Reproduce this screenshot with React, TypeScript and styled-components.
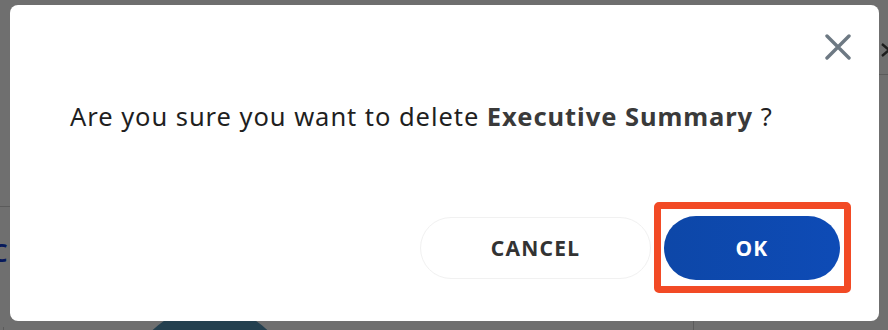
import React from "react";
import styled, { createGlobalStyle } from "styled-components";

const Global = createGlobalStyle`
  html, body { margin: 0; padding: 0; }
  body { width: 888px; height: 330px; overflow: hidden; background: #fff; font-family: "Noto Sans", Lato, sans-serif; }
`;

const Page = styled.div`
  position: relative;
  width: 888px;
  height: 330px;
  overflow: hidden;
  background: #fff;
  display: flex;
`;

const LeftRail = styled.div`
  width: 20px;
  display: flex;
  flex-direction: column;
`;

const RailHead = styled.div<{ $h: number }>`
  height: ${(p) => p.$h}px;
  flex-shrink: 0;
  border-bottom: 1px solid #d0d0d0;
  display: flex;
  align-items: flex-start;
`;

const Letter = styled.span`
  margin: 30px 0 0 -9px;
  color: #123bd0;
  font-size: 26px;
  line-height: 30px;
  font-weight: 600;
`;

const RailLine = styled.div`
  flex: 1;
  margin: 60px 0 0 3px;
  border-left: 1px solid #d0d0d0;
`;

const Center = styled.div`
  flex: 1;
  display: flex;
  align-items: flex-end;
`;

const Avatar = styled.div`
  width: 166px;
  height: 166px;
  flex-shrink: 0;
  margin: 0 0 -143px 107px;
  border-radius: 50%;
  background: #5393b6;
`;

const Divider = styled.div`
  width: 1px;
  height: 30px;
  margin-left: 400px;
  background: #d0d0d0;
`;

const RightRail = styled.div`
  width: 18px;
  display: flex;
  flex-direction: column;
`;

const ChevronBox = styled.div`
  height: 75px;
  padding: 38px 0 0 10px;
  box-sizing: border-box;
  border-bottom: 1px solid #d0d0d0;
`;

const Overlay = styled.div`
  position: absolute;
  inset: 0;
  background: rgba(0, 0, 0, 0.565);
  padding: 5px 9px 9px 10px;
  display: flex;
  box-sizing: border-box;
`;

const Modal = styled.div`
  flex: 1;
  background: #fff;
  border-radius: 8px;
  display: flex;
  flex-direction: column;
  box-sizing: border-box;
  padding: 29px 28px 0 60px;
`;

const Header = styled.div`
  display: flex;
  justify-content: flex-end;
  height: 26px;
`;

const CloseButton = styled.button`
  width: 26px;
  height: 26px;
  padding: 0;
  border: none;
  background: none;
  display: flex;
  align-items: center;
  justify-content: center;
  cursor: pointer;
`;

const Message = styled.p`
  margin: 40px 0 0 0;
  font-size: 25.5px;
  line-height: 32px;
  color: #1f1f1f;
  letter-spacing: 0.95px;
`;

const Strong = styled.strong`
  font-weight: 700;
  color: #3a3a3a;
`;

const Footer = styled.div`
  margin-top: 84px;
  display: flex;
  justify-content: flex-end;
  align-items: center;
  gap: 13px;
  padding-right: 11px;
`;

const Button = styled.button<{ $primary?: boolean }>`
  height: ${(p) => (p.$primary ? 64 : 62)}px;
  width: ${(p) => (p.$primary ? 176 : 231)}px;
  border-radius: 32px;
  font-family: "Noto Sans", Lato, sans-serif;
  font-weight: 700;
  font-size: 21px;
  letter-spacing: 1.2px;
  cursor: pointer;
  box-sizing: border-box;
  color: ${(p) => (p.$primary ? "#fff" : "#333")};
  background: ${(p) => (p.$primary ? "linear-gradient(90deg, #0d47a8, #0e4bb6)" : "#fff")};
  border: ${(p) => (p.$primary ? "none" : "1px solid #f1f1f1")};
`;

const Highlight = styled.div`
  position: relative;
  &::after {
    content: "";
    position: absolute;
    left: -10px;
    top: -14px;
    right: -11px;
    bottom: -13px;
    border: 7px solid #f24a25;
    border-radius: 5px;
    pointer-events: none;
  }
`;

export default function App() {
  return (
    <>
      <Global />
      <Page>
        <LeftRail>
          <RailHead $h={206} />
          <Letter>C</Letter>
          <RailLine />
        </LeftRail>
        <Center>
          <Avatar />
          <Divider />
        </Center>
        <RightRail>
          <ChevronBox>
            <svg width="12" height="24" viewBox="0 0 12 24">
              <path d="M2 6 L9 12 L2 18" fill="none" stroke="#444" strokeWidth="2.4" />
            </svg>
          </ChevronBox>
        </RightRail>
        <Overlay>
          <Modal role="dialog">
            <Header>
              <CloseButton aria-label="Close">
                <svg width="26" height="26" viewBox="0 0 26 26">
                  <path
                    d="M2 2 L24 24 M24 2 L2 24"
                    stroke="#6d7983"
                    strokeWidth="3.4"
                    strokeLinecap="round"
                  />
                </svg>
              </CloseButton>
            </Header>
            <Message>
              Are you sure you want to delete <Strong>Executive Summary</Strong> ?
            </Message>
            <Footer>
              <Button>CANCEL</Button>
              <Highlight>
                <Button $primary>OK</Button>
              </Highlight>
            </Footer>
          </Modal>
        </Overlay>
      </Page>
    </>
  );
}
